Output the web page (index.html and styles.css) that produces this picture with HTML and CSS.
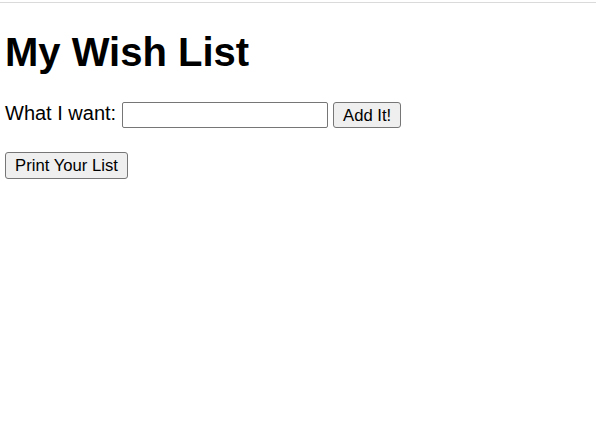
FILE: index.html
```html
<!DOCTYPE html>
<html lang="en">
<head>
<meta charset="utf-8">
<title>My Wish List</title>
<link rel="stylesheet" href="styles.css">
</head>
<body>
<div class="topbar"></div>
<main class="page">
  <h1 class="title">My Wish List</h1>
  <form class="add-row" onsubmit="return false;">
    <label class="label" for="item">What I want:</label>
    <input class="text-input" id="item" type="text">
    <button class="btn btn-add" type="button">Add It!</button>
  </form>
  <div class="print-row">
    <button class="btn btn-print" type="button">Print Your List</button>
  </div>
</main>
</body>
</html>
```

FILE: styles.css
```css
html, body {
  margin: 0;
  padding: 0;
  background: #ffffff;
}

body {
  font-family: "Liberation Sans", Arial, sans-serif;
  color: #000000;
}

.topbar {
  height: 2px;
  border-bottom: 1px solid #dadada;
}

.page {
  padding: 0 0 0 5px;
}

.title {
  margin: 26px 0 0 0;
  font-size: 40px;
  font-weight: bold;
  line-height: 46px;
}

.add-row {
  margin: 27px 0 0 0;
  display: flex;
  align-items: center;
  height: 26px;
}

.label {
  font-size: 20px;
  line-height: 23px;
  margin-left: 0;
  margin-top: -3px;
}

.text-input {
  box-sizing: border-box;
  width: 206px;
  height: 26px;
  margin: 0 0 0 6px;
  padding: 0 3px;
  border: 1px solid #767676;
  border-radius: 2px;
  background: #ffffff;
  font-family: "Liberation Sans", Arial, sans-serif;
  font-size: 16.67px;
  outline: none;
}

.btn {
  box-sizing: border-box;
  margin: 0;
  border: 1px solid #767676;
  border-radius: 3px;
  background: #efefef;
  color: #000000;
  font-family: "Liberation Sans", Arial, sans-serif;
  font-size: 16.67px;
  line-height: 19px;
  padding: 0;
  cursor: default;
}

.btn-add {
  width: 68px;
  height: 26px;
  margin-left: 5px;
}

.print-row {
  margin-top: 24px;
  display: flex;
}

.btn-print {
  width: 123px;
  height: 27px;
}
```
